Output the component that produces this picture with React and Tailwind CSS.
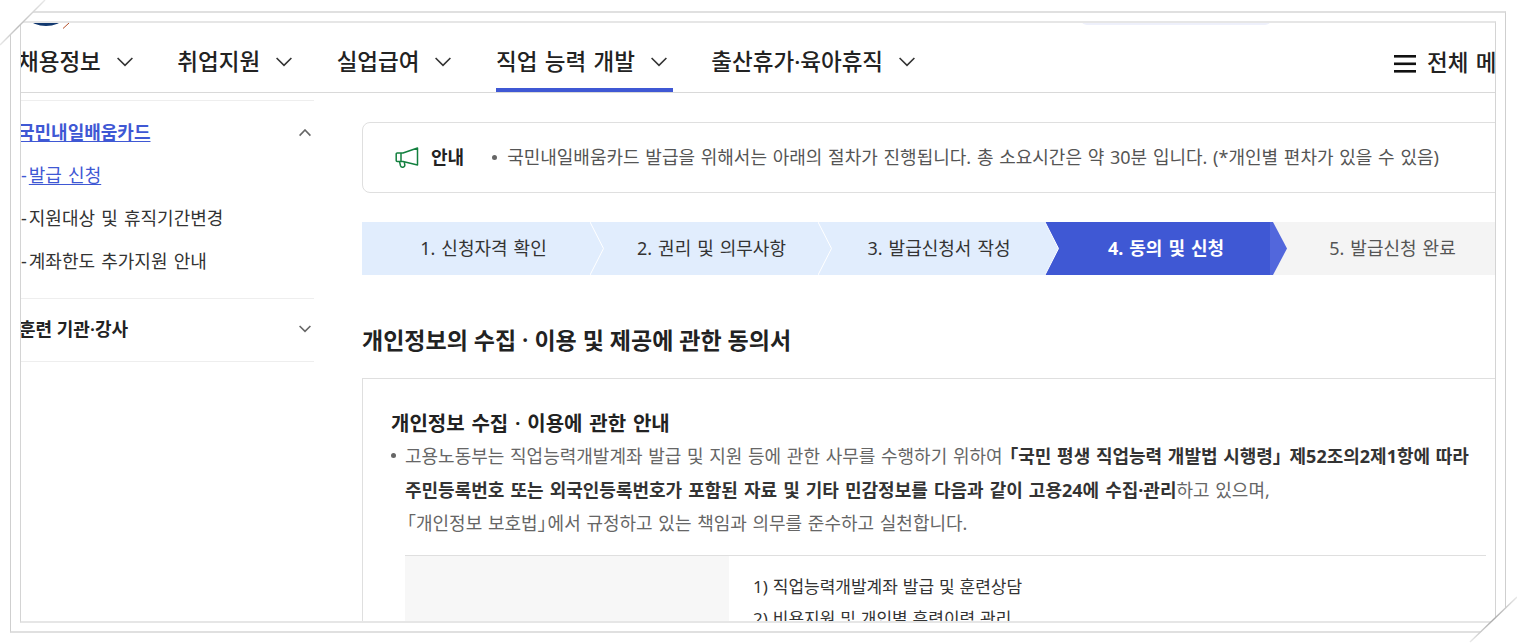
import React from "react";

function Chev({ up, w = 16, h = 8, color = "#333", sw = 1.6 }) {
  return (
    <svg width={w} height={h + 2} viewBox={`0 0 ${w} ${h + 2}`} fill="none" stroke={color} strokeWidth={sw} className="shrink-0" aria-hidden="true">
      <path d={up ? `M0.6 ${h + 0.6}L${w / 2} 1L${w - 0.6} ${h + 0.6}` : `M0.6 1L${w / 2} ${h + 0.4}L${w - 0.6} 1`} />
    </svg>
  );
}

function NavItem({ label, active }) {
  return (
    <div className="relative flex h-full shrink-0 items-center gap-[16px] pr-[6.5px]">
      <span className="text-[22.5px] leading-[30px] font-medium whitespace-nowrap text-[#222] [word-spacing:1.5px]">{label}</span>
      <Chev />
      {active && <span className="absolute right-0 bottom-0 left-0 h-[4px] bg-[#3f58d4]" />}
    </div>
  );
}

function Step({ label, kind, width, z = "" }) {
  const bg = kind === "active" ? "bg-[#3f58d4] font-bold text-white" : kind === "done" ? "bg-[#e1edfd] text-[#333]" : "bg-[#f4f4f4] text-[#555]";
  return (
    <div className={`relative flex h-[53px] shrink-0 items-center justify-center pl-[15px] text-[18px] [word-spacing:1.3px] ${width} ${bg} ${z}`}>
      <span className="whitespace-nowrap">{label}</span>
      {kind === "done" && (
        <svg width="15" height="53" viewBox="0 0 15 53" fill="none" className="absolute top-0 left-full" aria-hidden="true">
          <path d="M0 0L13.5 26.5L0 53z" fill="#e1edfd" />
          <path d="M0 0L13.5 26.5L0 53" stroke="#ffffff" strokeWidth="1" />
        </svg>
      )}
      {kind === "active" && (
        <svg width="18" height="53" viewBox="0 0 18 53" className="absolute top-0 right-[-16px]" aria-hidden="true">
          <path d="M0 0H3L17 26.5L3 53H0z" fill="#5267dc" />
        </svg>
      )}
    </div>
  );
}

function Sub({ children, className = "" }) {
  return (
    <li className={className}>
      <span className="mr-[2px]">-</span>
      {children}
    </li>
  );
}

export default function App() {
  return (
    <div
      className="relative h-[643px] w-[1517px] overflow-hidden bg-white pt-[11px] pl-[10px]"
      style={{ fontFamily: '"Noto Sans", "Noto Sans CJK KR", sans-serif' }}
    >
      {/* outer screenshot frame */}
      <div className="h-[622px] w-[1496px] border-x border-x-[#cfcfcf] border-y-2 border-y-[#e0e0e0] pt-[8px] pl-[9px]">
        <div className="relative h-[602px] w-[1476px] overflow-hidden border-x border-x-[#d4d4d4] border-y-2 border-y-[#e6e6e6]">
          {/* clipped logo and pill on top */}
          <div className="absolute top-[-57px] left-[-5px] h-[60px] w-[60px] rounded-full bg-[#12386f]" />
          <svg width="10" height="6" viewBox="0 0 10 6" className="absolute top-0 left-[41px]" aria-hidden="true">
            <path d="M1 5.5L7 0" stroke="#b5502a" strokeWidth="1" fill="none" />
          </svg>
          <div className="absolute top-[-4px] left-[1060px] h-[6px] w-[190px] rounded-b-[8px] bg-[#eef0fb]" />

          {/* nav */}
          <div className="flex h-[70px] items-end border-b border-[#d9d9d9]">
            <div className="ml-[-3px] flex h-[60px] items-stretch gap-[38px]">
              <NavItem label="채용정보" />
              <NavItem label="취업지원" />
              <NavItem label="실업급여" />
              <NavItem label="직업 능력 개발" active />
              <NavItem label="출산휴가·육아휴직" />
            </div>
            <div className="ml-auto flex h-[60px] w-[101px] shrink-0 items-center gap-[11px] overflow-hidden pt-[1px]">
              <svg width="22" height="18" viewBox="0 0 22 18" className="mt-[3px] shrink-0" aria-hidden="true">
                <rect x="0" y="0" width="22" height="2.6" fill="#111" />
                <rect x="0" y="7.5" width="22" height="2.6" fill="#111" />
                <rect x="0" y="15" width="22" height="2.6" fill="#111" />
              </svg>
              <span className="text-[22.5px] font-medium whitespace-nowrap text-[#222] [word-spacing:1.5px]">전체 메뉴</span>
            </div>
          </div>

          <div className="flex items-start">
            {/* sidebar */}
            <aside className="w-[293px] shrink-0 pt-[7px]">
              <div className="border-y border-[#eeeeee] pt-[17px] pb-[23px]">
                <div className="flex h-[29px] items-center justify-between pr-[3px]">
                  <span className="ml-[-3px] text-[18px] font-semibold text-[#3f58d4] underline underline-offset-2">국민내일배움카드</span>
                  <Chev up w={12} h={6} color="#666" />
                </div>
                <ul className="mt-[14px] flex flex-col gap-[15px] text-[18px] leading-[28px] text-[#333] [word-spacing:1.5px]">
                  <Sub className="text-[#3f58d4]"><span className="underline underline-offset-2">발급 신청</span></Sub>
                  <Sub>지원대상 및 휴직기간변경</Sub>
                  <Sub>계좌한도 추가지원 안내</Sub>
                </ul>
              </div>
              <div className="flex h-[63px] items-center justify-between border-b border-[#eeeeee] pr-[3px] pb-[2px]">
                <span className="ml-[-2px] text-[18px] font-semibold text-[#222]">훈련 기관·강사</span>
                <Chev w={12} h={6} color="#666" />
              </div>
            </aside>

            {/* main */}
            <main className="ml-[48px] w-[1150px] shrink-0 pt-[29px]">
              <div className="flex h-[71px] items-center rounded-[8px] border border-[#dfdfdf] pl-[32px]">
                <svg width="24" height="22" viewBox="0 0 24 22" fill="none" stroke="#13803f" strokeWidth="1.5" aria-hidden="true" className="shrink-0">
                  <path d="M22.5 1v17L8 14.5H2.2a1 1 0 0 1-1-1V7a1 1 0 0 1 1-1H8z" strokeLinejoin="round" />
                  <path d="M6 6v8.5" />
                  <path d="M4.5 14.5l1 4.2a2.2 2.2 0 0 0 4.3-.8l-.5-2.8" />
                </svg>
                <strong className="ml-[12px] text-[18px] font-bold text-[#222]">안내</strong>
                <span className="ml-[28px] h-[5px] w-[5px] shrink-0 rounded-full bg-[#666]" />
                <span className="ml-[10px] text-[18px] whitespace-nowrap text-[#555] [word-spacing:1.05px]">
                  국민내일배움카드 발급을 위해서는 아래의 절차가 진행됩니다. 총 소요시간은 약 30분 입니다. (*개인별 편차가 있을 수 있음)
                </span>
              </div>

              {/* steps */}
              <div className="mt-[29px] flex">
                <Step label="1. 신청자격 확인" kind="done" width="w-[228px]" z="z-40" />
                <Step label="2. 권리 및 의무사항" kind="done" width="w-[228px]" z="z-30" />
                <Step label="3. 발급신청서 작성" kind="done" width="w-[227px]" z="z-20" />
                <Step label="4. 동의 및 신청" kind="active" width="w-[227px]" z="z-10" />
                <Step label="5. 발급신청 완료" kind="todo" width="w-[240px] pr-[14px]" />
              </div>

              <h2 className="mt-[49px] text-[23px] leading-[32px] font-semibold text-[#222]">개인정보의 수집 · 이용 및 제공에 관한 동의서</h2>

              {/* card */}
              <section className="mt-[22px] border border-[#dfdfdf] pt-[30px] pl-[28px]">
                <h3 className="text-[20px] leading-[30px] font-semibold text-[#222] [word-spacing:1.6px]">개인정보 수집 · 이용에 관한 안내</h3>
                <div className="relative pt-[1px] pl-[14px] text-[18px] leading-[33px] text-[#666] [word-spacing:1px]">
                  <span className="absolute top-[14px] left-0 h-[5px] w-[5px] rounded-full bg-[#666]" />
                  <p className="whitespace-nowrap">
                    고용노동부는 직업능력개발계좌 발급 및 지원 등에 관한 사무를 수행하기 위하여{" "}
                    <b className="font-bold text-[#333]">
                      <span className="ml-[-8px]">「</span>국민 평생 직업능력 개발법 시행령<span className="tracking-[-7px]">」</span> 제52조의2제1항에 따라
                    </b>
                  </p>
                  <p className="mt-[1px] whitespace-nowrap">
                    <b className="font-bold text-[#333] [word-spacing:1.4px]">주민등록번호 또는 외국인등록번호가 포함된 자료 및 기타 민감정보를 다음과 같이 고용24에 수집·관리</b>하고 있으며,
                  </p>
                  <p className="whitespace-nowrap">
                    <span className="ml-[-7px]">「</span>개인정보 보호법<span className="tracking-[-8px]">」</span>에서 규정하고 있는 책임과 의무를 준수하고 실천합니다.
                  </p>
                </div>
                <div className="mt-[15px] ml-[14px] flex w-[1081px] border-t border-[#dfdfdf]">
                  <div className="h-[120px] w-[324px] shrink-0 bg-[#f7f7f7]" />
                  <div className="pt-[15px] pl-[24px] text-[17px] leading-[32px] text-[#333] [word-spacing:0.5px]">
                    <p>1) 직업능력개발계좌 발급 및 훈련상담</p>
                    <p>2) 비용지원 및 개인별 훈련이력 관리</p>
                  </div>
                </div>
              </section>
            </main>
          </div>
        </div>
      </div>

      {/* folded corners of the photo frame */}
      <svg width="1517" height="643" viewBox="0 0 1517 643" className="pointer-events-none absolute top-0 left-0" aria-hidden="true">
        <defs>
          <linearGradient id="cornerA" x1="45" y1="0" x2="0" y2="45" gradientUnits="userSpaceOnUse">
            <stop offset="0" stopColor="#e8e8e8" />
            <stop offset="0.6" stopColor="#bdbdbd" />
            <stop offset="1" stopColor="#e8e8e8" />
          </linearGradient>
          <linearGradient id="cornerB" x1="1517" y1="597" x2="1470" y2="642" gradientUnits="userSpaceOnUse">
            <stop offset="0" stopColor="#e8e8e8" />
            <stop offset="0.5" stopColor="#aaaaaa" />
            <stop offset="1" stopColor="#e8e8e8" />
          </linearGradient>
        </defs>
        <path d="M0 0h45L0 45z" fill="#ffffff" />
        <path d="M45 0L0 45" stroke="url(#cornerA)" strokeWidth="1.4" />
        <path d="M1517 643h-47l47-46z" fill="#ffffff" />
        <path d="M1517 597l-47 45" stroke="url(#cornerB)" strokeWidth="1.4" />
      </svg>
    </div>
  );
}
